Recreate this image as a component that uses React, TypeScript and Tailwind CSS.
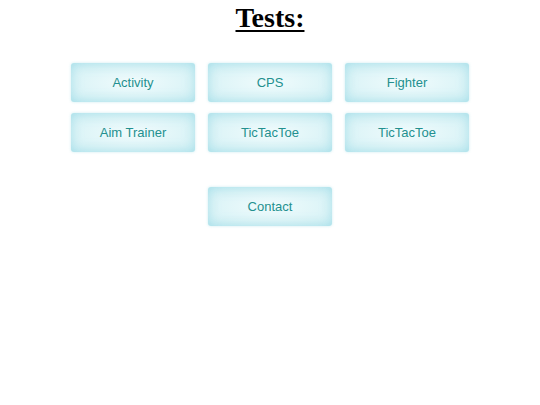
const tests = ['Activity', 'CPS', 'Fighter', 'Aim Trainer', 'TicTacToe', 'TicTacToe'];

function TestButton({ label }: { label: string }) {
  return (
    <button
      className="flex h-[39px] w-[124px] items-center justify-center rounded-[3px] text-[13px] text-[#23908f] shadow-[inset_0_0_12px_rgba(140,210,225,0.6),0_0_3px_rgba(170,225,232,0.6)] bg-[radial-gradient(ellipse_at_center,#f0fbfc_0%,#dcf4f7_65%,#cdeff4_100%)]"
      style={{ fontFamily: '"Liberation Sans", Arial, sans-serif' }}
    >
      {label}
    </button>
  );
}

export default function App() {
  return (
    <div className="min-h-[405px] w-full bg-white">
      <h1
        className="pt-[2px] text-center text-[28px] font-bold leading-[31px] text-black underline decoration-2 underline-offset-[3px]"
        style={{ fontFamily: '"Liberation Serif", "Times New Roman", serif' }}
      >
        Tests:
      </h1>
      <div className="mx-auto mt-[30px] grid w-[398px] grid-cols-3 gap-x-[13px] gap-y-[11px]">
        {tests.map((t, i) => (
          <TestButton key={i} label={t} />
        ))}
      </div>
      <div className="mt-[35px] flex justify-center">
        <TestButton label="Contact" />
      </div>
    </div>
  );
}
